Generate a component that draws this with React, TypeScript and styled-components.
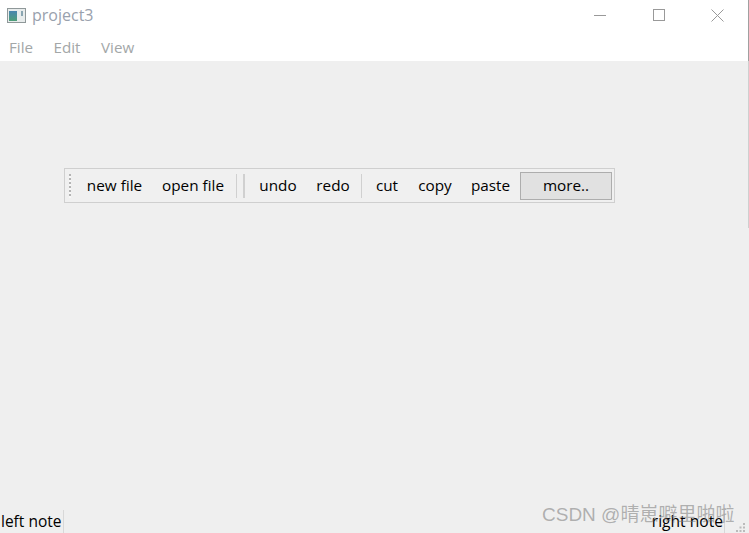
import React from "react";
import styled, { createGlobalStyle } from "styled-components";

const Global = createGlobalStyle`
  html, body { margin: 0; padding: 0; background: #efefef; }
  body { font-family: "Open Sans", "Noto Sans", "Liberation Sans", sans-serif; }
  #root { height: 533px; overflow: hidden; }
`;

const Window = styled.div`
  width: 749px;
  height: 533px;
  display: flex;
  flex-direction: column;
  position: relative;
  overflow: hidden;
`;

const WindowEdge = styled.div`
  position: absolute;
  right: 0;
  top: 0;
  width: 1px;
  height: 228px;
  background: linear-gradient(to bottom, #a0a0a0 0 61px, #cfcfcf 61px 100%);
`;

const TitleBar = styled.div`
  height: 32px;
  background: #fff;
  display: flex;
  align-items: center;
  padding-left: 7px;
  padding-bottom: 2px;
  box-sizing: border-box;
`;

const TitleText = styled.span`
  margin-left: 6px;
  font-size: 16px;
  color: #99a1ad;
`;

const WinButtons = styled.div`
  margin-left: auto;
  display: flex;
  align-items: center;
  margin-right: 2px;
`;

const WinButton = styled.div`
  width: 59px;
  height: 30px;
  display: flex;
  align-items: center;
  justify-content: center;
`;

const MenuBar = styled.div`
  height: 29px;
  background: #fff;
  display: flex;
  align-items: center;
  padding-left: 9px;
  gap: 20.5px;
  box-sizing: border-box;
`;

const MenuItem = styled.span`
  font-size: 15.2px;
  color: #a3a7a8;
`;

const Canvas = styled.div`
  flex: 1;
  background: #efefef;
  padding: 107px 0 0 64px;
`;

const ToolBar = styled.div`
  width: 551px;
  height: 35px;
  box-sizing: border-box;
  border: 1px solid #cfcfcf;
  background: #f0f0f0;
  display: flex;
  align-items: center;
`;

const Grip = styled.div`
  width: 2px;
  height: 24px;
  margin-left: 4px;
  margin-right: 5px;
  background: repeating-linear-gradient(to bottom, #b4b4b4 0 2px, #f8f8f8 2px 4px);
`;

const ToolButton = styled.span<{ $w: number }>`
  width: ${(p) => p.$w}px;
  text-align: center;
  font-size: 15.3px;
  line-height: 20px;
  padding-bottom: 2px;
  color: #000;
  white-space: nowrap;
`;

const Sep = styled.div<{ $w: number; $before: number; $after: number }>`
  width: ${(p) => p.$w}px;
  height: 24px;
  background: #d0d0d0;
  margin: 0 ${(p) => p.$after}px 0 ${(p) => p.$before}px;
`;

const MoreButton = styled.div`
  width: 92px;
  height: 28px;
  margin-left: 1px;
  box-sizing: border-box;
  border: 1px solid #adadad;
  background: #e1e1e1;
  display: flex;
  align-items: center;
  justify-content: center;
  font-size: 15.3px;
  padding-bottom: 2px;
  color: #000;
`;

const StatusBar = styled.div`
  height: 23px;
  display: flex;
  align-items: center;
  background: #efefef;
`;

const LeftNote = styled.div`
  font-size: 15.5px;
  color: #000;
  padding-left: 1px;
  width: 62px;
  height: 23px;
  line-height: 22px;
  white-space: nowrap;
  border-right: 1px solid #d8d8d8;
`;

const RightNote = styled.div`
  margin-left: auto;
  font-size: 15.6px;
  line-height: 22px;
  height: 23px;
  color: #000;
  white-space: nowrap;
  margin-right: 24px;
  padding-right: 1px;
  border-right: 1px solid #d8d8d8;
`;

const Watermark = styled.div`
  position: absolute;
  left: 542px;
  top: 499px;
  font-family: "Liberation Sans", "Noto Sans CJK SC", sans-serif;
  font-size: 19px;
  color: rgba(120, 120, 120, 0.55);
  white-space: nowrap;
`;

const SizeGrip = styled.svg`
  position: absolute;
  right: 4px;
  bottom: 1px;
`;

export default function App() {
  return (
    <Window>
      <Global />
      <TitleBar>
        <svg width="19" height="15" viewBox="0 0 19 15">
          <rect x="0.5" y="0.5" width="18" height="14" fill="#e8ecec" stroke="#8f9899" />
          <defs>
            <linearGradient id="ic" x1="0" y1="0" x2="0" y2="1">
              <stop offset="0" stopColor="#4a86b0" />
              <stop offset="1" stopColor="#4f9f78" />
            </linearGradient>
          </defs>
          <rect x="2" y="3" width="8" height="10" fill="url(#ic)" />
          <rect x="14" y="3" width="2" height="5" fill="#8aa6b2" />
        </svg>
        <TitleText>project3</TitleText>
        <WinButtons>
          <WinButton>
            <svg width="12" height="12" viewBox="0 0 12 12">
              <path d="M0 6.5H12" stroke="#999" fill="none" />
            </svg>
          </WinButton>
          <WinButton>
            <svg width="12" height="12" viewBox="0 0 12 12">
              <rect x="0.5" y="0.5" width="11" height="11" stroke="#999" fill="none" />
            </svg>
          </WinButton>
          <WinButton>
            <svg width="13" height="13" viewBox="0 0 13 13">
              <path d="M0.5 0.5L12.5 12.5M12.5 0.5L0.5 12.5" stroke="#999" fill="none" />
            </svg>
          </WinButton>
        </WinButtons>
      </TitleBar>
      <MenuBar>
        <MenuItem>File</MenuItem>
        <MenuItem>Edit</MenuItem>
        <MenuItem>View</MenuItem>
      </MenuBar>
      <Canvas>
        <ToolBar>
          <Grip />
          <ToolButton $w={77}>new file</ToolButton>
          <ToolButton $w={80}>open file</ToolButton>
          <Sep $w={1} $before={3} $after={6} />
          <Sep $w={2} $before={0} $after={4} />
          <ToolButton $w={58}>undo</ToolButton>
          <ToolButton $w={52}>redo</ToolButton>
          <Sep $w={1} $before={2} $after={4} />
          <ToolButton $w={42}>cut</ToolButton>
          <ToolButton $w={54}>copy</ToolButton>
          <ToolButton $w={57}>paste</ToolButton>
          <MoreButton>more..</MoreButton>
        </ToolBar>
      </Canvas>
      <StatusBar>
        <LeftNote>left note</LeftNote>
        <RightNote>right note</RightNote>
      </StatusBar>
      <Watermark>CSDN @晴崽噼里啪啦</Watermark>
      <WindowEdge />
      <SizeGrip width="9" height="9" viewBox="0 0 9 9">
        <g fill="#bbbbbb">
          <rect x="7" y="0" width="2" height="2" />
          <rect x="3.5" y="3.5" width="2" height="2" />
          <rect x="7" y="3.5" width="2" height="2" />
          <rect x="0" y="7" width="2" height="2" />
          <rect x="3.5" y="7" width="2" height="2" />
          <rect x="7" y="7" width="2" height="2" />
        </g>
      </SizeGrip>
    </Window>
  );
}
